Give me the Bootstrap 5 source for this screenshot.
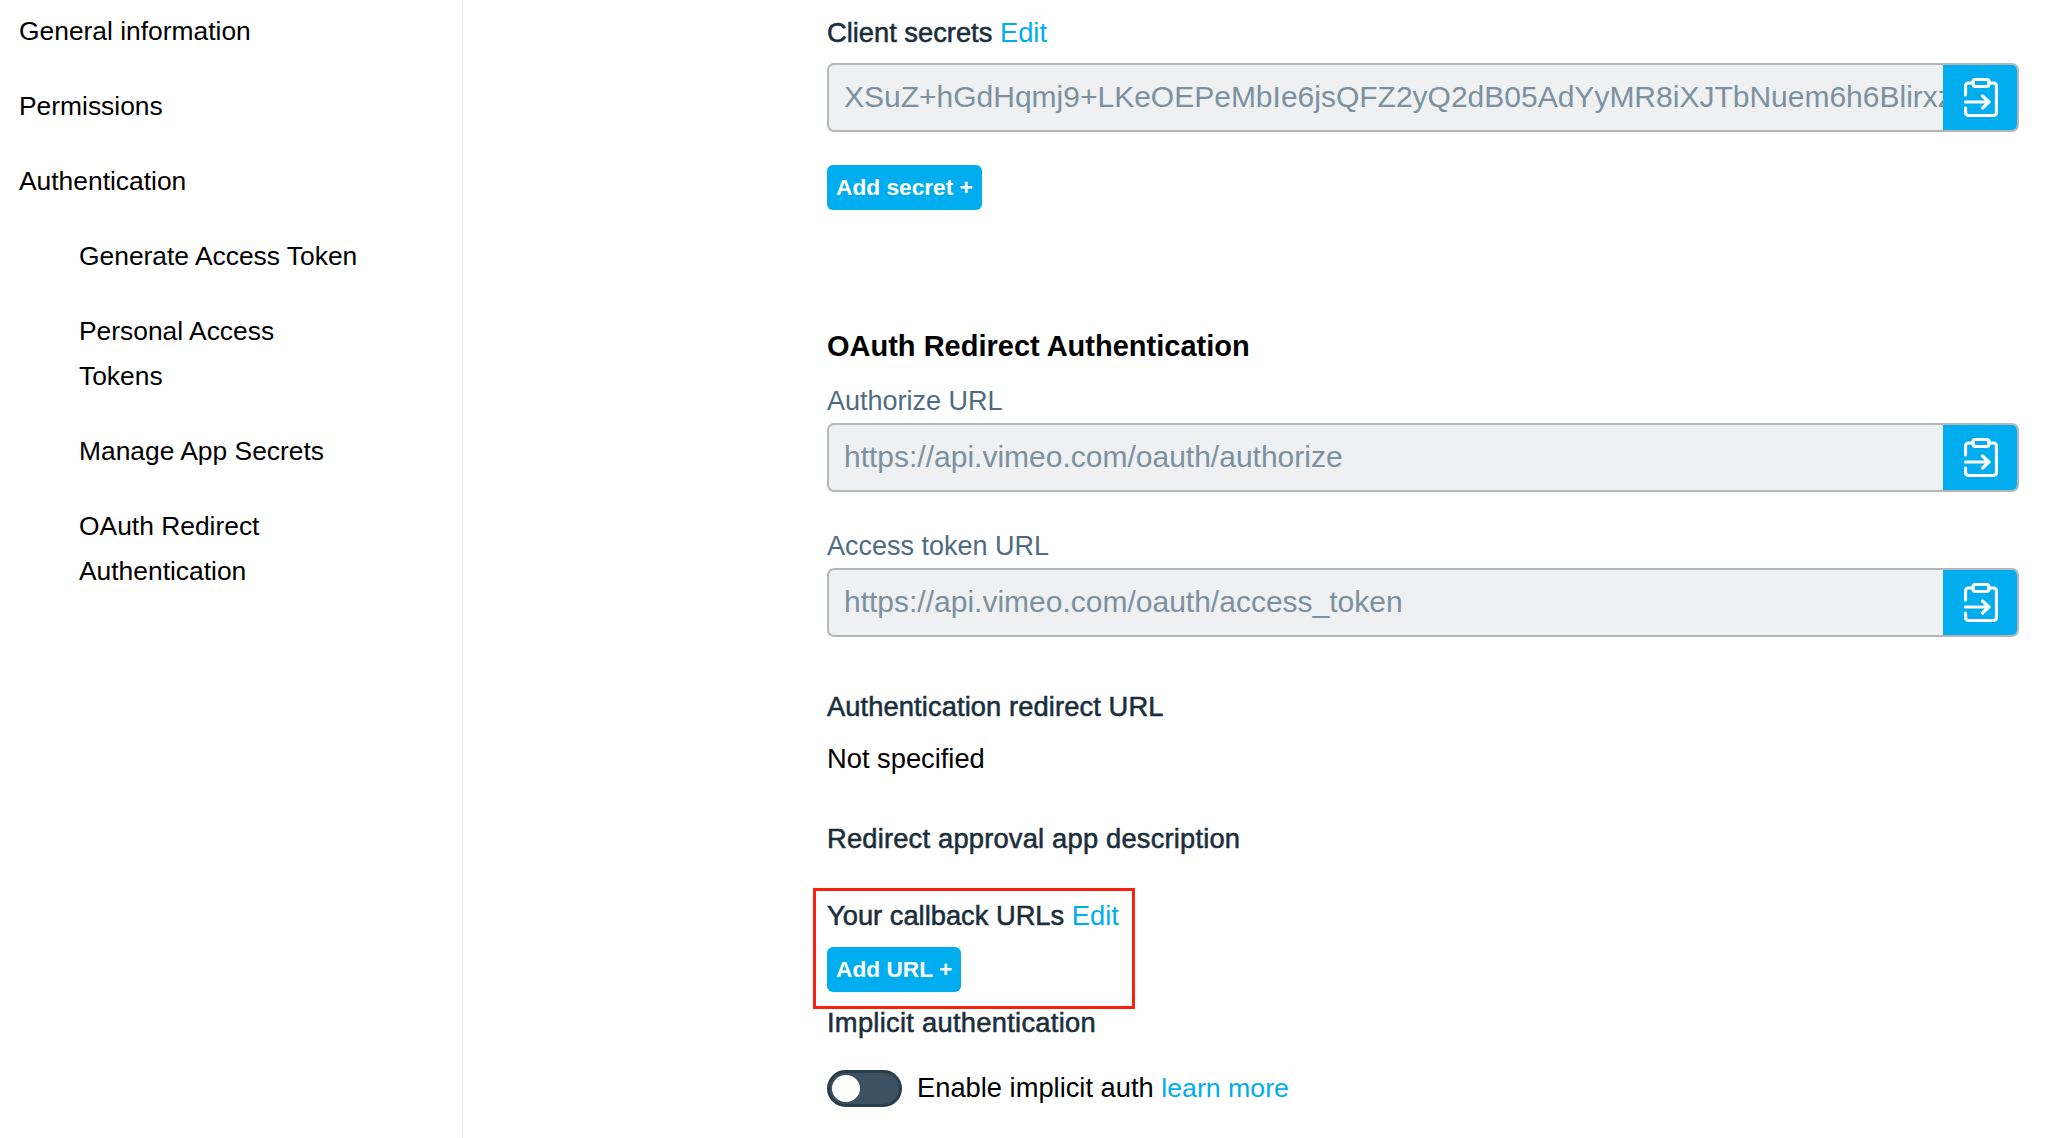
<!DOCTYPE html>
<html lang="en">
<head>
<meta charset="utf-8">
<title>OAuth Redirect Authentication</title>
<link rel="stylesheet" href="https://cdn.jsdelivr.net/npm/bootstrap@5.3.0/dist/css/bootstrap.min.css">
<style>
html,body{height:1138px;overflow:hidden}
body{background:#fff;font-family:"Liberation Sans",Arial,sans-serif;font-size:27.3px;color:#000}
.shell{height:1138px}
.side{width:463px;flex:none;border-right:1px solid #e6e9eb;padding:9px 0 0 19px;font-size:26.4px}
.side-item{display:block;line-height:45px;margin-bottom:30px;color:#000;text-decoration:none}
.side-sub{margin-left:60px;width:300px}
.main{padding:10px 29px 0 364px;flex:1;min-width:0}
.lbl-strong{color:#1a2e3b;line-height:45px;-webkit-text-stroke:.55px #1a2e3b}
.lbl-strong a,.lnk{color:#00adef;text-decoration:none;-webkit-text-stroke:0}
.lnk{font-size:26.7px}
.track-s{letter-spacing:.1px}
.track-m{letter-spacing:.2px}
.track-l{letter-spacing:.28px}
.copy-box{height:69px;border:2px solid #b3b7b9;border-radius:7px;background:#eef0f2;overflow:hidden}
.copy-val{flex:1;min-width:0;white-space:nowrap;overflow:hidden;padding-left:15px;font-size:30px;color:#7c919f;line-height:63px}
.copy-btn{width:76px;flex:none;background:#00adef;margin:-2px -2px -2px 0}
.cta{display:inline-block;background:#00adef;color:#fff;font-weight:700;font-size:22.7px;line-height:45px;height:45px;padding:0 9px;border-radius:6px;text-decoration:none}
.oauth-title{font-size:29px;font-weight:700;color:#000;line-height:40px;margin:0}
.fld-label{color:#4f6b81;line-height:40px;font-size:27px}
.plain{line-height:45px}
.callout{border:3px solid #f8220f;width:322px;height:121px;margin-left:-14px;padding-left:11px}
.sw{width:75px;height:37px;border-radius:19px;background:#3c5263;border:3px solid #293c4b;position:relative;flex:none}
.sw-knob{position:absolute;left:2px;top:2px;width:28px;height:27px;border-radius:50%;background:#fff}
</style>
</head>
<body>
<div class="shell d-flex">
  <nav class="side">
    <a class="side-item" href="#">General information</a>
    <a class="side-item" href="#">Permissions</a>
    <a class="side-item" href="#">Authentication</a>
    <a class="side-item side-sub" href="#">Generate Access Token</a>
    <a class="side-item side-sub" href="#">Personal Access<br>Tokens</a>
    <a class="side-item side-sub" href="#">Manage App Secrets</a>
    <a class="side-item side-sub" href="#">OAuth Redirect<br>Authentication</a>
  </nav>
  <main class="main">
    <div class="lbl-strong" style="height:53px">Client secrets <a href="#">Edit</a></div>
    <div class="copy-box d-flex">
      <div class="copy-val">XSuZ+hGdHqmj9+LKeOEPeMbIe6jsQFZ2yQ2dB05AdYyMR8iXJTbNuem6h6Blirxz</div>
      <div class="copy-btn d-flex align-items-center justify-content-center"><svg width="34" height="39" viewBox="0 0 34 39" fill="none" stroke="#fff" stroke-width="3.2" stroke-linecap="round" stroke-linejoin="round"><path d="M9 5H4.500a3 3 0 0 0-3 3v9M1.500 30v4.500a3 3 0 0 0 3 3h25a3 3 0 0 0 3-3V8a3 3 0 0 0-3-3H25"/><rect x="9" y="1.500" width="16" height="7" rx="2.500"/><path d="M1.500 24H25M18.500 18l6.500 6-6.500 6"/></svg></div>
    </div>
    <div style="margin-top:33px"><a class="cta" href="#">Add secret +</a></div>
    <h2 class="oauth-title" style="margin-top:116px">OAuth Redirect Authentication</h2>
    <div class="fld-label" style="margin-top:15px;height:42px">Authorize URL</div>
    <div class="copy-box d-flex">
      <div class="copy-val">https://api.vimeo.com/oauth/authorize</div>
      <div class="copy-btn d-flex align-items-center justify-content-center"><svg width="34" height="39" viewBox="0 0 34 39" fill="none" stroke="#fff" stroke-width="3.2" stroke-linecap="round" stroke-linejoin="round"><path d="M9 5H4.500a3 3 0 0 0-3 3v9M1.500 30v4.500a3 3 0 0 0 3 3h25a3 3 0 0 0 3-3V8a3 3 0 0 0-3-3H25"/><rect x="9" y="1.500" width="16" height="7" rx="2.500"/><path d="M1.500 24H25M18.500 18l6.500 6-6.500 6"/></svg></div>
    </div>
    <div class="fld-label" style="margin-top:34px;height:42px">Access token URL</div>
    <div class="copy-box d-flex">
      <div class="copy-val">https://api.vimeo.com/oauth/access_token</div>
      <div class="copy-btn d-flex align-items-center justify-content-center"><svg width="34" height="39" viewBox="0 0 34 39" fill="none" stroke="#fff" stroke-width="3.2" stroke-linecap="round" stroke-linejoin="round"><path d="M9 5H4.500a3 3 0 0 0-3 3v9M1.500 30v4.500a3 3 0 0 0 3 3h25a3 3 0 0 0 3-3V8a3 3 0 0 0-3-3H25"/><rect x="9" y="1.500" width="16" height="7" rx="2.500"/><path d="M1.500 24H25M18.500 18l6.500 6-6.500 6"/></svg></div>
    </div>
    <div class="lbl-strong track-s" style="margin-top:47px">Authentication redirect URL</div>
    <div class="plain" style="margin-top:7px">Not specified</div>
    <div class="lbl-strong track-m" style="margin-top:35px">Redirect approval app description</div>
    <div class="callout" style="margin-top:27px">
      <div class="lbl-strong" style="padding-top:2px;height:56px">Your callback URLs <a href="#">Edit</a></div>
      <a class="cta" href="#">Add URL +</a>
    </div>
    <div class="lbl-strong track-l" style="margin-top:-9px">Implicit authentication</div>
    <div class="d-flex align-items-center" style="margin-top:23px;gap:15px">
      <div class="sw"><div class="sw-knob"></div></div>
      <div>Enable implicit auth <a class="lnk" href="#">learn more</a></div>
    </div>
  </main>
</div>
<script src="https://cdn.jsdelivr.net/npm/bootstrap@5.3.0/dist/js/bootstrap.bundle.min.js"></script>
</body>
</html>
